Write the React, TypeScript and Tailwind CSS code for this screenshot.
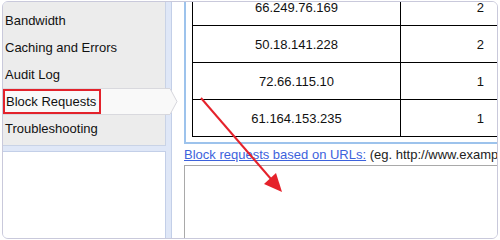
const NAV = ['Bandwidth', 'Caching and Errors', 'Audit Log', 'Block Requests', 'Troubleshooting'];
const ROWS = [
  { ip: '66.249.76.169', n: 2 },
  { ip: '50.18.141.228', n: 2 },
  { ip: '72.66.115.10', n: 1 },
  { ip: '61.164.153.235', n: 1 },
];

function NavItem({ label }: { label: string }) {
  if (label !== 'Block Requests') {
    return <div className="flex h-[27px] items-center pl-[2px] text-[#111]">{label}</div>;
  }
  return (
    <div className="relative flex h-[27px] border-y border-[#d9d9de] bg-[#f9f9f9]">
      <span className="flex h-full w-[98px] items-center border-2 border-[#e3222b] pl-[1px] text-[#111]">
        {label}
      </span>
      {/* tab pointer over the blue strip */}
      <svg className="absolute left-[162px] top-[-1px] z-10" width="14" height="27" viewBox="0 0 14 27">
        <path d="M0 0H5L12 13.5L5 27H0Z" fill="#f9f9f9" />
        <polyline points="0,0.5 5,0.5 12,13.5 5,26.5 0,26.5" fill="none" stroke="#d6d6dc" strokeWidth="1" />
      </svg>
    </div>
  );
}

export default function App() {
  return (
    <div
      className="relative h-[240px] w-[500px] overflow-hidden bg-white pl-[2px] pt-[1px] text-[13px]"
      style={{ fontFamily: '"Liberation Sans", Arial, sans-serif' }}
    >
      <div className="flex h-[238px] w-[496px] overflow-hidden rounded-[6px] border border-[#c9c9db]">
        <div className="flex w-[169px] shrink-0 flex-col border-r border-[#c3cfe8] bg-[#dfe7f7]">
          <div className="relative w-[163px] border-b border-r border-[#c9d3e6] bg-[#ececec] pb-[3px] pt-[5px]">
            {NAV.map((l) => (
              <NavItem key={l} label={l} />
            ))}
          </div>
          <div className="mt-[5px] w-[163px] flex-1 border-r border-t border-[#c3cfe8] bg-white" />
        </div>

        <div className="min-w-0 flex-1 overflow-hidden bg-white pl-[12px]">
          <div className="-mt-[14px] w-[340px] border-b-2 border-l-2 border-[#9dc3ec] pb-[5px] pl-[6px]">
            <div className="w-[320px] border-l border-t border-black">
              {ROWS.map((r) => (
                <div key={r.ip} className="flex h-[37px] border-b border-black text-[#111]">
                  <div className="flex w-[208px] shrink-0 items-center justify-center border-r border-black pt-[2px]">
                    {r.ip}
                  </div>
                  <div className="flex flex-1 items-center justify-end pr-[28px] pt-[2px]">{r.n}</div>
                </div>
              ))}
            </div>
          </div>
          <p className="mt-[3px] whitespace-nowrap leading-[16px]">
            <a className="text-[#3d62dc] underline">Block requests based on URLs:</a>
            <span className="text-[#222]"> (eg. http://www.example.com/*)</span>
          </p>
          <div className="mt-[2px] h-[100px] w-[400px] border border-[#a9a9a9]" />
        </div>
      </div>

      {/* annotation arrow */}
      <svg className="pointer-events-none absolute left-0 top-0 z-20" width="500" height="240">
        <line x1="201" y1="98" x2="271" y2="179" stroke="#e5222b" strokeWidth="2" />
        <polygon points="282,192 276,173 264,184" fill="#e5222b" />
      </svg>
    </div>
  );
}
